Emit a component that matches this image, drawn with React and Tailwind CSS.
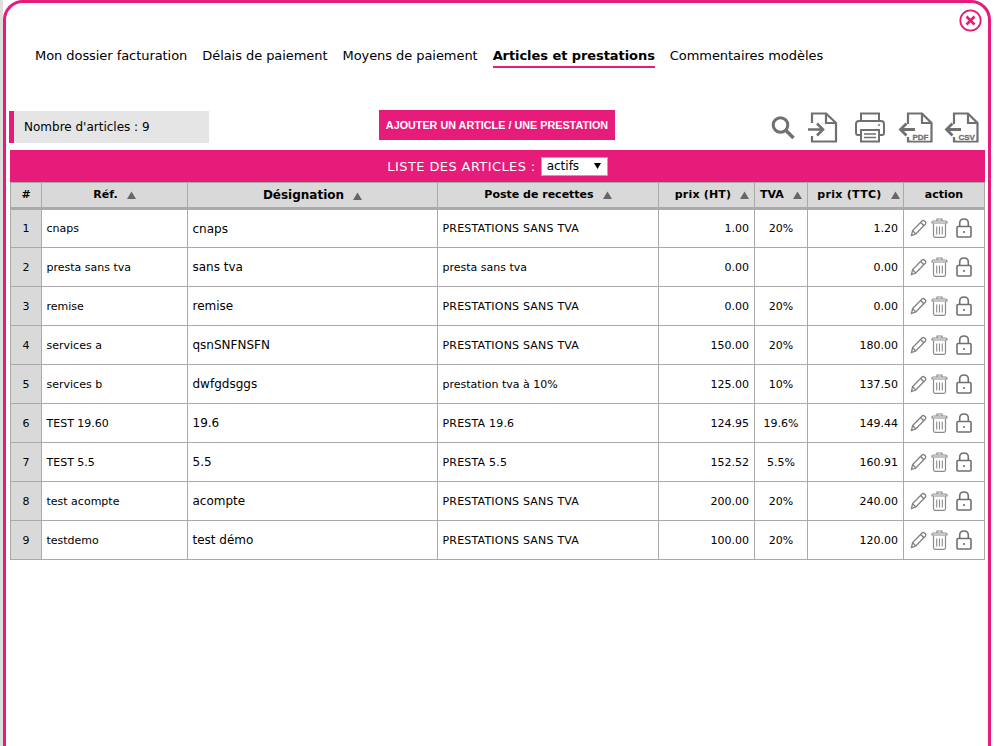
import React from 'react'

const tabs = ['Mon dossier facturation', 'Délais de paiement', 'Moyens de paiement', 'Articles et prestations', 'Commentaires modèles']

const articles = [
  ['cnaps', 'cnaps', 'PRESTATIONS SANS TVA', '1.00', '20%', '1.20'],
  ['presta sans tva', 'sans tva', 'presta sans tva', '0.00', '', '0.00'],
  ['remise', 'remise', 'PRESTATIONS SANS TVA', '0.00', '20%', '0.00'],
  ['services a', 'qsnSNFNSFN', 'PRESTATIONS SANS TVA', '150.00', '20%', '180.00'],
  ['services b', 'dwfgdsggs', 'prestation tva à 10%', '125.00', '10%', '137.50'],
  ['TEST 19.60', '19.6', 'PRESTA 19.6', '124.95', '19.6%', '149.44'],
  ['TEST 5.5', '5.5', 'PRESTA 5.5', '152.52', '5.5%', '160.91'],
  ['test acompte', 'acompte', 'PRESTATIONS SANS TVA', '200.00', '20%', '240.00'],
  ['testdemo', 'test démo', 'PRESTATIONS SANS TVA', '100.00', '20%', '120.00'],
]

const colonnes = [
  { label: '#', w: 'w-[31px]', cls: 'text-[11px]' },
  { label: 'Réf.', w: 'w-[146px]', sort: true, cls: 'text-[11px]' },
  { label: 'Désignation', w: 'w-[250px]', sort: true, cls: 'text-[12px]' },
  { label: 'Poste de recettes', w: 'w-[221px]', sort: true, cls: 'text-[11px]' },
  { label: 'prix (HT)', w: 'w-[96px]', sort: true, cls: 'text-[11px] pl-[11px] tracking-[0.2px]' },
  { label: 'TVA', w: 'w-[53px]', sort: true, cls: 'text-[11px]' },
  { label: 'prix (TTC)', w: 'w-[96px]', sort: true, cls: 'text-[11px] pl-[6px] tracking-[0.3px]' },
  { label: 'action', w: 'w-[81px]', cls: 'text-[11px]' },
]

function Arrow() {
  return (
    <svg width="9" height="8" viewBox="0 0 9 8" className="inline-block ml-[9px] align-[-1px]">
      <path d="M4.5 0.5 L9 8 H0 Z" fill="#666" />
    </svg>
  )
}

function FileExport({ label }) {
  return (
    <svg width="35" height="31" viewBox="0 0 35 31" fill="none" stroke="#707070" strokeWidth="2.2">
      <path d="M10 12 V1.5 H24 L33.5 11 V29.5 H10 V25" />
      <path d="M24 1.5 V11 H33.5" />
      <path d="M17 17.5 H3 M8.5 11.5 L2.5 17.5 L8.5 23.5" strokeWidth="2.8" />
      <rect x="13" y="20" width="19" height="8.5" fill="#fff" stroke="none" />
      <text x="14.5" y="27.5" fontFamily="Liberation Sans, sans-serif" fontWeight="700" fontSize="8" stroke="#707070" strokeWidth="0.3" fill="#707070">{label}</text>
    </svg>
  )
}

function Actions() {
  return (
    <div className="flex items-center pl-[6px] gap-[4px] -mt-[1px]">
      <svg width="17" height="18" viewBox="0 0 17 18" fill="none" stroke="#808080" strokeWidth="1.3">
        <path d="M1.5 16.5 L2.6 11.6 L12 2 Q13.2 1 14.4 2 L15.4 3 Q16.2 4.2 15.2 5.3 L5.8 15 Z" />
        <path d="M2.6 11.6 L5.8 15 M10.6 3.5 L13.9 6.7" />
      </svg>
      <svg width="17" height="20" viewBox="0 0 17 20" fill="none" stroke="#8a8a8a" strokeWidth="1.2">
        <path d="M1 5 H16 V4 Q16 3 14.5 3 H2.5 Q1 3 1 4 Z" />
        <path d="M6 3 V1 H11 V3 M2.5 5.5 V17.5 Q2.5 19.3 4 19.3 H13 Q14.5 19.3 14.5 17.5 V5.5" />
        <path d="M5.7 8.5 V16.5 M8.5 8.5 V16.5 M11.3 8.5 V16.5" strokeWidth="1.1" />
      </svg>
      <svg width="16" height="20" viewBox="0 0 16 20" fill="none" stroke="#707070" strokeWidth="1.6" className="ml-[4px]">
        <rect x="1" y="8.5" width="14" height="10.5" rx="1" />
        <path d="M3.7 8.5 V5 Q3.7 1 8 1 Q12.3 1 12.3 5 V8.5" />
        <circle cx="8" cy="14" r="1.1" fill="#707070" stroke="none" />
      </svg>
    </div>
  )
}

export default function App() {
  return (
    <div className="h-[746px] w-[994px] overflow-hidden bg-white font-['DejaVu_Sans',sans-serif] text-black">
      <div className="border-l-[3px] border-[#dedede] w-[991px]">
        <div className="relative h-[780px] w-[988px] rounded-[20px] border-[3px] border-[#e71b7a] bg-white">
          <button className="absolute right-[6px] top-[6px]">
            <svg width="23" height="23" viewBox="0 0 23 23" fill="none" stroke="#e71b7a" strokeWidth="1.8">
              <circle cx="11.5" cy="11.5" r="10.2" />
              <path d="M7.5 7.5 L15.5 15.5 M15.5 7.5 L7.5 15.5" strokeWidth="2.6" />
            </svg>
          </button>

          <div className="flex gap-[15px] pl-[29px] pt-[43px] h-[107px]">
            {tabs.map((t, i) => (
              <div key={t} className={`h-[22px] text-[13px] leading-[20px] ${i === 3 ? 'font-bold border-b-2 border-[#e71b7a] tracking-[-0.07px]' : 'tracking-[-0.06px]'}`}>{t}</div>
            ))}
          </div>

          <div className="flex h-[40px] items-start ml-[3px]">
            <div className="mt-[1px] flex h-[32px] w-[200px] items-center border-l-[5px] border-[#e71b7a] bg-[#e5e5e5] pl-[10px] text-[12px]">
              Nombre d'articles : 9
            </div>
            <button className="ml-[170px] h-[30px] w-[236px] whitespace-nowrap bg-[#e71b7a] font-['Liberation_Sans',sans-serif] text-[10.8px] font-bold text-white">
              AJOUTER UN ARTICLE / UNE PRESTATION
            </button>
            <div className="ml-[156px] flex items-center gap-[13px] mt-[2px]">
              <svg width="24" height="25" viewBox="0 0 24 25" fill="none" stroke="#707070">
                <circle cx="9.5" cy="10" r="7.3" strokeWidth="3" />
                <path d="M15 15.5 L22.5 23" strokeWidth="3.6" />
              </svg>
              <svg width="30" height="31" viewBox="0 0 30 31" fill="none" stroke="#707070" strokeWidth="2.2">
                <path d="M4 11 V1.5 H18 L28 11 V29.5 H4 V24" />
                <path d="M18 1.5 V11 H28" />
                <path d="M0 17.5 H14 M9 11.5 L15 17.5 L9 23.5" strokeWidth="2.6" />
              </svg>
              <svg width="30" height="31" viewBox="0 0 30 31" fill="none" stroke="#707070" strokeWidth="2" className="ml-[4px]">
                <path d="M6 9 V1.5 H24 V9" />
                <path d="M6 23 H3 Q1 23 1 20.5 V12 Q1 9 4 9 H26 Q29 9 29 12 V20.5 Q29 23 27 23 H24" />
                <path d="M6 18 H24 V29.5 H6 Z" />
                <path d="M9 22 H21 M9 25.5 H21" strokeWidth="1.6" />
                <circle cx="24" cy="13" r="1" fill="#707070" stroke="none" />
              </svg>
              <FileExport label="PDF" />
              <div className="ml-[-2px]"><FileExport label="CSV" /></div>
            </div>
          </div>

          <div className="ml-[4px] w-[975px]">
            <div className="flex h-[32px] items-center justify-center bg-[#e71b7a] text-[13px] text-white">
              <span className="tracking-[0.4px] pt-[1px]">LISTE DES ARTICLES :</span>
              <div className="ml-[5px] flex h-[19px] w-[67px] items-center justify-between border border-[#aaa] bg-white pl-[5px] pr-[6px] text-[12px] text-black">
                actifs
                <svg width="7" height="6" viewBox="0 0 7 6"><path d="M0 0 H7 L3.5 6 Z" fill="#000" /></svg>
              </div>
            </div>

            <table className="w-[975px] table-fixed border-collapse text-[11px]">
              <colgroup>
                {colonnes.map((c) => <col key={c.label} className={c.w} />)}
              </colgroup>
              <thead>
                <tr className="h-[26px] bg-[#d9d9d9]">
                  {colonnes.map((c) => (
                    <th key={c.label} className={`border border-[#aaa] border-b-[3px] p-0 text-center font-bold whitespace-nowrap ${c.cls}`}>
                      {c.label}{c.sort && <Arrow />}
                    </th>
                  ))}
                </tr>
              </thead>
              <tbody>
                {articles.map((a, i) => (
                  <tr key={a[0]} className="h-[39px]">
                    <td className="border border-[#aaa] bg-[#d9d9d9] p-0 pt-[2px] text-center">{i + 1}</td>
                    <td className="border border-[#aaa] pl-[4.5px] pt-[2px]">{a[0]}</td>
                    <td className="border border-[#aaa] pl-[4.5px] text-[12px]">{a[1]}</td>
                    <td className={`border border-[#aaa] pl-[4.5px] pt-[2px] ${a[2] === a[2].toUpperCase() ? 'tracking-[0.2px]' : ''}`}>{a[2]}</td>
                    <td className="border border-[#aaa] pr-[5px] pt-[2px] text-right">{a[3]}</td>
                    <td className="border border-[#aaa] p-0 pt-[2px] text-center">{a[4]}</td>
                    <td className="border border-[#aaa] pr-[5px] pt-[2px] text-right">{a[5]}</td>
                    <td className="border border-[#aaa] p-0"><Actions /></td>
                  </tr>
                ))}
              </tbody>
            </table>
          </div>
        </div>
      </div>
    </div>
  )
}
